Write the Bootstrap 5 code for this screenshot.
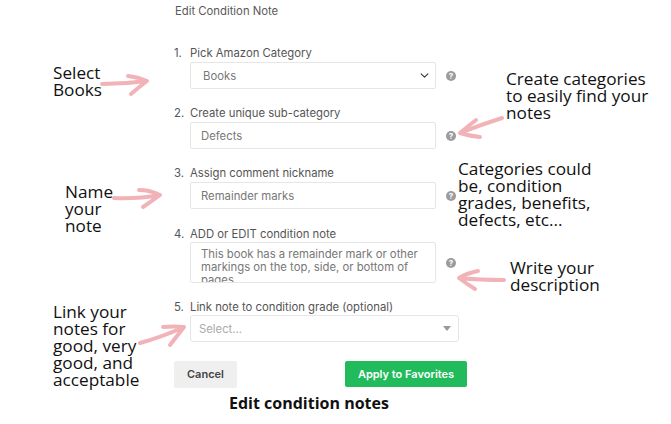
<!DOCTYPE html>
<html>
<head>
    <title>Edit condition notes</title>
    <link href="https://cdn.jsdelivr.net/npm/bootstrap@5.3.2/dist/css/bootstrap.min.css" rel="stylesheet">
    <script src="https://cdn.jsdelivr.net/npm/bootstrap@5.3.2/dist/js/bootstrap.bundle.min.js"></script>
    <style>
        body {
            background-color: #fff;
            font-family: Inter, "Noto Sans", sans-serif;
            font-size: 11.3px;
            color: #555;
        }
        .guide-page {
            position: relative;
            width: 671px;
            height: 424px;
            overflow: hidden;
            padding: 4px 0 0 175px;
        }
        .form-title {
            line-height: 14px;
            margin-bottom: 27px;
            color: #5a5a5a;
        }
        .note-step {
            display: grid;
            grid-template-columns: 15px 1fr;
            margin-bottom: 16px;
            line-height: 16px;
        }
        .step-number { margin-left: -1px; }
        .step-label { margin-bottom: 1px; }
        .step-label-low { padding-top: 1px; margin-bottom: 0; }
        .note-step .form-control,
        .note-step .form-select {
            width: 246px;
            height: 27px;
            border-radius: 2px;
            border: 1px solid #e6e6e6;
            font-size: 11.3px;
            line-height: 16px;
            color: #777;
            padding: 4px 10px;
            box-shadow: none;
        }
        .note-step .form-select {
            padding-left: 12px;
            background-size: 11px 9px;
            background-position: right 5px center;
        }
        .note-step textarea.form-control {
            height: 41px;
            padding-top: 5px;
            line-height: 13px;
            resize: none;
            overflow: hidden;
        }
        .note-step .grade-select {
            width: 269px;
            padding-left: 8px;
            color: #aaa;
            border-radius: 3px;
            background-image: url("data:image/svg+xml,%3Csvg xmlns='http://www.w3.org/2000/svg' viewBox='0 0 8 5'%3E%3Cpath fill='%23999' d='M0 0h8L4 5z'/%3E%3C/svg%3E");
            background-size: 8px 5px;
            background-position: right 7px center;
        }
        .help-dot {
            width: 10px;
            height: 10px;
            margin-left: 10px;
            border-radius: 50%;
            background-color: #9b9b9b;
            color: #fff;
            font-size: 8px;
            font-weight: 700;
            line-height: 10px;
            text-align: center;
        }
        .form-actions {
            width: 293px;
            margin-top: 19px;
            margin-left: -1px;
        }
        .btn-cancel, .btn-apply {
            padding: 0;
            border: 0;
            font-size: 11px;
            font-weight: 600;
            border-radius: 2px;
        }
        .btn-cancel { width: 63px; height: 27px; background-color: #efefef; color: #444; }
        .btn-apply { width: 122px; height: 26px; background-color: #22bb5b; color: #fff; }
        .page-caption {
            width: 293px;
            margin-top: 5px;
            padding-left: 54px;
            font-family: "Open Sans", sans-serif;
            font-size: 16px;
            font-weight: 700;
            line-height: 20px;
            color: #111;
            white-space: nowrap;
        }
        .callout {
            position: absolute;
            font-family: "Open Sans", sans-serif;
            font-size: 17.2px;
            line-height: 17px;
            color: #111;
            white-space: nowrap;
        }
        .arrows {
            position: absolute;
            left: 0;
            top: 0;
            fill: none;
            stroke: #f2b3b8;
            stroke-width: 4;
            stroke-linecap: round;
            stroke-linejoin: round;
        }
        .callout-books { left: 53px; top: 64px; }
        .callout-find { left: 506px; top: 70px; }
        .callout-kinds { left: 458px; top: 160px; }
        .callout-name { left: 65px; top: 183px; }
        .callout-write { left: 510px; top: 259px; }
        .callout-link { left: 53px; top: 303px; }
    </style>
</head>
<body>
    <div class="guide-page">
        <div class="form-title">Edit Condition Note</div>

        <div class="note-step">
            <span class="step-number">1.</span>
            <div>
                <div class="step-label">Pick Amazon Category</div>
                <div class="d-flex align-items-center">
                    <select class="form-select"><option>Books</option></select>
                    <span class="help-dot">?</span>
                </div>
            </div>
        </div>
        <div class="note-step">
            <span class="step-number">2.</span>
            <div>
                <div class="step-label">Create unique sub-category</div>
                <div class="d-flex align-items-center">
                    <input class="form-control" value="Defects">
                    <span class="help-dot">?</span>
                </div>
            </div>
        </div>
        <div class="note-step">
            <span class="step-number">3.</span>
            <div>
                <div class="step-label">Assign comment nickname</div>
                <div class="d-flex align-items-center">
                    <input class="form-control" value="Remainder marks">
                    <span class="help-dot">?</span>
                </div>
            </div>
        </div>
        <div class="note-step">
            <span class="step-number step-label-low">4.</span>
            <div>
                <div class="step-label-low">ADD or EDIT condition note</div>
                <div class="d-flex align-items-center">
                    <textarea class="form-control">This book has a remainder mark or other markings on the top, side, or bottom of pages</textarea>
                    <span class="help-dot">?</span>
                </div>
            </div>
        </div>
        <div class="note-step mb-0">
            <span class="step-number">5.</span>
            <div>
                <div class="mb-0">Link note to condition grade (optional)</div>
                <select class="form-select grade-select"><option>Select...</option></select>
            </div>
        </div>

        <div class="form-actions d-flex justify-content-between align-items-start">
            <button class="btn btn-cancel">Cancel</button>
            <button class="btn btn-apply">Apply to Favorites</button>
        </div>
        <div class="page-caption">Edit condition notes</div>

        <div class="callout callout-books">Select<br>Books</div>
        <div class="callout callout-find">Create categories<br>to easily find your<br>notes</div>
        <div class="callout callout-kinds">Categories could<br>be, condition<br>grades, benefits,<br>defects, etc...</div>
        <div class="callout callout-name">Name<br>your<br>note</div>
        <div class="callout callout-write">Write your<br>description</div>
        <div class="callout callout-link">Link your<br>notes for<br>good, very<br>good, and<br>acceptable</div>

        <svg class="arrows" width="671" height="424" viewBox="0 0 671 424">
            <path d="M102 84 Q125 84 147 81 M128 76 Q138 77 147 81 Q139 87 131 94"/>
            <path d="M114 198 Q138 199 160 195 M139 190 Q150 190 160 195 Q152 201 143 207"/>
            <path d="M502 118 Q480 125 460 133 M476 120 Q467 127 460 133 Q469 136 480 137"/>
            <path d="M504 280 Q480 280 459 278 M478 271 Q467 273 459 278 Q467 284 475 289"/>
            <path d="M140 343 Q162 337 184 327 M163 327 Q174 326 184 327 Q177 336 170 345"/>
        </svg>
    </div>
</body>
</html>
